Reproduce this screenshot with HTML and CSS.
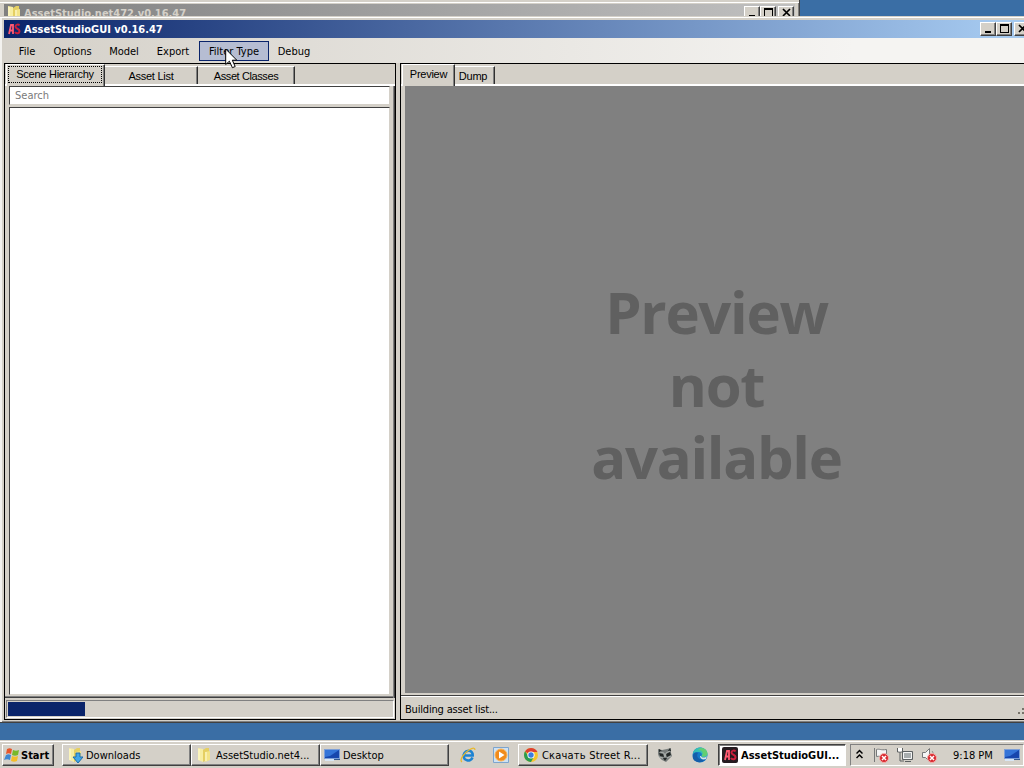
FILE: index.html
```html
<!doctype html>
<html>
<head>
<meta charset="utf-8">
<title>AssetStudioGUI v0.16.47</title>
<link rel="stylesheet" href="styles.css">
</head>
<body>
<svg class="defs" width="0" height="0">
  <defs>
    <symbol id="folder" viewBox="0 0 16 16">
      <path d="M2 1l5 1v13l-5-2z" fill="#f7eda2"/>
      <path d="M7 3l3-2h3v11l-6 3z" fill="#e5cf62"/>
      <path d="M9 5l5-1v9l-5 2z" fill="#f3e387"/>
      <path d="M3 2v11M10 5v9" stroke="#fffbd4"/>
    </symbol>
    <symbol id="as" viewBox="0 0 16 16">
      <path d="M3 13L5 4h2v9M4 9.500h3" fill="none" stroke="#ff5a72" stroke-width="1.800"/>
      <path d="M13.500 4.500c-1-1.500-4-1.200-4 1 0 2.500 4 2 4 4.500 0 2.800-3.500 2.800-4.500 1" fill="none" stroke="#c81f3c" stroke-width="2"/>
    </symbol>
    <symbol id="screen" viewBox="0 0 16 16">
      <path d="M0 2h16v10H0z" fill="#7d9fd8"/>
      <path d="M1 3h14v8H1z" fill="#1746ad"/>
      <path d="M1 3h14l-9 6-5 1z" fill="#3474d8"/>
      <path d="M1 12h9v2H1z" fill="#d8e6f5"/>
      <path d="M10 12h6v1h-6z" fill="#35598f"/>
    </symbol>
    <symbol id="no" viewBox="0 0 10 10">
      <circle cx="5" cy="5" r="4.500" fill="#d9282f" stroke="#f3b0ac"/>
      <path d="M3 3l4 4M7 3l-4 4" stroke="#fff" stroke-width="1.500"/>
    </symbol>
    <symbol id="min" viewBox="0 0 10 9"><path d="M1 7h6v2H1z"/></symbol>
    <symbol id="max" viewBox="0 0 10 9"><path d="M0 0h9v9H0zM1 2v6h7V2z" fill-rule="evenodd"/></symbol>
    <symbol id="close" viewBox="0 0 10 9"><path d="M1 1l7 7M8 1l-7 7" stroke="#000" stroke-width="1.700"/></symbol>
  </defs>
</svg>

<div class="desktop">
  <div class="window back">
    <div class="titlebar inactive">
      <svg class="icon"><use href="#folder"/></svg>
      <span class="caption">AssetStudio.net472.v0.16.47</span>
      <div class="controls">
        <span class="btn"><svg><use href="#min"/></svg></span>
        <span class="btn"><svg><use href="#max"/></svg></span>
        <span class="btn close"><svg><use href="#close"/></svg></span>
      </div>
    </div>
  </div>

  <div class="window main">
    <div class="titlebar">
      <svg class="icon"><use href="#as"/></svg>
      <span class="caption">AssetStudioGUI v0.16.47</span>
      <div class="controls">
        <span class="btn"><svg><use href="#min"/></svg></span>
        <span class="btn"><svg><use href="#max"/></svg></span>
        <span class="btn close"><svg><use href="#close"/></svg></span>
      </div>
    </div>
    <div class="menu">
      <span class="item file">File</span>
      <span class="item options">Options</span>
      <span class="item model">Model</span>
      <span class="item export">Export</span>
      <span class="item filter hot">Filter Type</span>
      <span class="item debug">Debug</span>
    </div>
    <div class="split">
      <div class="panel left">
        <div class="tabs">
          <span class="tab scene active"><span class="focus">Scene Hierarchy</span></span>
          <span class="tab list">Asset List</span>
          <span class="tab classes">Asset Classes</span>
        </div>
        <div class="page">
          <div class="search">Search</div>
          <div class="tree"></div>
        </div>
        <div class="progress"><div class="bar" style="width:77px"></div></div>
      </div>
      <div class="panel right">
        <div class="tabs">
          <span class="tab preview active">Preview</span>
          <span class="tab dump">Dump</span>
        </div>
        <div class="canvas">
          <p>Preview</p>
          <p>not</p>
          <p>available</p>
        </div>
        <div class="status">
          <span>Building asset list...</span>
          <svg class="grip" width="6" height="10"><path d="M4 1h2v2H4zM4 5h2v2H4zM0 5h2v2H0z" fill="#77736a"/></svg>
        </div>
      </div>
    </div>
  </div>

  <div class="taskbar">
    <div class="task start">
      <svg class="icon" viewBox="0 0 16 16">
        <path d="M3 2c2-1 3-1 5 0L7 7C5 6 4 6 2 7z" fill="#e8562a"/>
        <path d="M9 3c2 1 4 1 6 0l-1 5c-2 1-4 1-6 0z" fill="#79b829"/>
        <path d="M2 8c2-1 3-1 5 0l-1 5c-2-1-4-1-6 0z" fill="#3f87d1"/>
        <path d="M8 9c2 1 4 1 6 0l-1 5c-2 1-4 1-6 0z" fill="#f5bd28"/>
      </svg>
      <span>Start</span>
    </div>
    <div class="task downloads">
      <svg class="icon" viewBox="0 0 16 16">
        <use href="#folder"/>
        <path d="M9 6h4v4h3l-5 6-5-6h3z" fill="#41a6e8" stroke="#1c6cab"/>
      </svg>
      <span>Downloads</span>
    </div>
    <div class="task assets">
      <svg class="icon"><use href="#folder"/></svg>
      <span>AssetStudio.net4...</span>
    </div>
    <div class="task desk">
      <svg class="icon"><use href="#screen"/></svg>
      <span>Desktop</span>
    </div>
    <svg class="icon ie" viewBox="0 0 16 16">
      <path d="M12.500 10.500C11.500 13 9 14 7 13.300 3.500 12.500 2.800 8.500 4.500 6c2-3 6-3 7.500-.5.7 1 .8 2 .7 3H5" fill="none" stroke="#1c83d3" stroke-width="2.600"/>
      <path d="M2 15C-1 13 4 6 9 3c4-2.500 6-2.500 6 0" fill="none" stroke="#e8b92c" stroke-width="1.300"/>
    </svg>
    <svg class="icon wmp" viewBox="0 0 16 16">
      <path d="M.5.5h15v15H.5z" fill="#cfe2f3" stroke="#7da5ce"/>
      <circle cx="8" cy="8" r="6" fill="#f08b1d"/>
      <circle cx="8" cy="8" r="6" fill="none" stroke="#fbb254"/>
      <path d="M6 4.500L11.500 8 6 11.500z" fill="#fff"/>
    </svg>
    <div class="task chrome">
      <svg class="icon" viewBox="0 0 16 16">
        <circle cx="8" cy="8" r="7" fill="#f6c52e"/>
        <path d="M8 8L2 4.500C5-.5 12 0 14.500 5H8z" fill="#df4031"/>
        <path d="M2 4.300C-.5 9 2 14.500 8 15l3-5.500-5 .5z" fill="#2b9c51"/>
        <circle cx="8" cy="8" r="3.600" fill="#fff"/>
        <circle cx="8" cy="8" r="2.700" fill="#3b7de0"/>
      </svg>
      <span>Скачать Street R...</span>
    </div>
    <svg class="icon raccoon" viewBox="0 0 16 16">
      <path d="M1 2l4 1 5-1 4-1v5l1 3-3 3-3 3-4-2-3-3-1-3z" fill="#777c7b"/>
      <path d="M2 6l4 1 1 3-4-1zM9 7l4-2 1 3-4 2zM6 11h4l-2 3zM2 2l3 2-3 1zM13 1l-2 3h3z" fill="#222726"/>
      <path d="M3 5l4 1 1 4 1-4 4-2M2 10l4 1M10 11l4-2" fill="none" stroke="#b9beba" stroke-width=".8"/>
    </svg>
    <svg class="icon edge" viewBox="0 0 16 16">
      <circle cx="8" cy="8" r="7.500" fill="#1679c8"/>
      <path d="M1 7C2-2 15-1 15.500 7c0 4-5 4-6 2 1-2 0-4-3-4-2 0-4 0-5.500 2z" fill="#36bfb4"/>
      <path d="M9 1c6 0 8 6 5 8-2 1-4 1-4.500 0C12 7 11 3 6 3z" fill="#62cf72"/>
      <path d="M6 6c-3 5 3 8 7.500 6C9 18-1 15 1 8c1-3 4-3 5-2z" fill="#155eaa"/>
      <path d="M9 9c1 2 4 2 6 0l-1 3c-3 1-6 0-6-3z" fill="#d9e5e5"/>
    </svg>
    <div class="task current">
      <svg class="icon" viewBox="0 0 16 16"><rect width="16" height="16" rx="2" fill="#241b20"/><use href="#as"/></svg>
      <span>AssetStudioGUI...</span>
    </div>
    <div class="tray">
      <svg class="chevrons" viewBox="0 0 7 10"><path d="M.5 4.500l3-3 3 3M.5 9l3-3 3 3" fill="none" stroke="#000" stroke-width="1.500"/></svg>
      <svg class="icon flag" viewBox="0 0 16 16">
        <path d="M1.500 1v14M3.500 2.500c3-1 4 1 10 0v7c-5 1-7-1-10 0z" fill="#f4f4f4" stroke="#77797a"/>
        <use href="#no" x="6" y="6" width="10" height="10"/>
      </svg>
      <svg class="icon net" viewBox="0 0 16 16">
        <path d="M5.500 4.500h10v8h-10z" fill="#a8adae" stroke="#5c6061"/>
        <path d="M6.500 5.500h8v6h-8z" fill="none" stroke="#f6f6f6"/>
        <path d="M8 14.500h6M.5 1v4h5V1M3 5v9h4" fill="none" stroke="#5c6061"/>
        <path d="M1.500 1v3h3V1" fill="#fff" stroke="#fff"/>
      </svg>
      <svg class="icon vol" viewBox="0 0 16 16">
        <path d="M1.500 5.500h3l4-4v13l-4-4h-3z" fill="#f5f5f5" stroke="#77797a"/>
        <path d="M11 4c1 1 1 2 1 3" fill="none" stroke="#888"/>
        <use href="#no" x="6" y="6" width="10" height="10"/>
      </svg>
      <span class="clock">9:18 PM</span>
      <svg class="icon show"><use href="#screen"/></svg>
    </div>
  </div>

  <svg class="cursor" viewBox="0 0 13 21"><path d="M.7 1v15.500l3.700-3.300 3 6.500 2.800-1.200-2.900-6.300h4.500z" fill="#fff" stroke="#000"/></svg>
</div>
</body>
</html>
```
FILE: styles.css
```css
* { box-sizing: border-box; }
body {
  margin: 0;
  overflow: hidden;
  font-family: "DejaVu Sans Condensed", "DejaVu Sans", sans-serif;
  font-stretch: condensed;
  font-size: 11px;
  color: #000;
}
p { margin: 0; }
svg { display: block; flex: none; }
span { white-space: nowrap; }
.defs { position: absolute; }
.desktop {
  position: relative;
  width: 1024px;
  height: 768px;
  overflow: hidden;
  background: #3a6ea5;
}
.icon { width: 16px; height: 16px; }

/* windows */
.window {
  position: absolute;
  background: #d4d0c8;
}
.back {
  left: 0;
  top: 0;
  width: 800px;
  height: 30px;
  padding: 4px 4px 0;
  border-right: 1px solid #404040;
  box-shadow: inset 0 2px #d4d0c8, inset 0 3px #fff, inset -1px 0 #808080;
}
.main {
  left: 0;
  top: 16px;
  width: 1040px;
  height: 707px;
  padding: 4px 0 0 4px;
  border-bottom: 1px solid #404040;
  box-shadow: inset 0 1px #d4d0c8, inset 0 2px #fff, inset 2px 0 #f3f2ef, inset 0 -1px #808080;
}
.titlebar {
  display: flex;
  align-items: center;
  height: 18px;
  padding-left: 2px;
  color: #fff;
  font-weight: bold;
  background: linear-gradient(90deg, #0a246a, #a6caf0 1000px);
}
.inactive {
  color: #d4d0c8;
  background: linear-gradient(90deg, #808080, #c0c0c0);
}
.caption { margin-left: 2px; }
.controls {
  display: flex;
  margin-left: auto;
  margin-right: 10px;
}
.inactive .controls { margin-right: 1px; }
.btn {
  width: 16px;
  height: 14px;
  padding: 1px 0 0 3px;
  background: #d4d0c8;
  border: 1px solid;
  border-color: #fff #404040 #404040 #fff;
  box-shadow: inset -1px -1px #808080;
}
.btn svg { width: 10px; height: 9px; }
.btn.close { margin-left: 2px; }

.menu {
  display: flex;
  height: 25px;
  padding: 3px 0 2px 6px;
  background: linear-gradient(90deg, #d4d0c8, #f5f4f2 850px);
}
.item {
  height: 20px;
  border: 1px solid transparent;
  line-height: 20px;
  text-align: center;
}
.file { width: 34px; }
.options { width: 57px; }
.model { width: 46px; }
.export { width: 52px; }
.filter { width: 70px; }
.debug { width: 50px; }
.hot {
  background: #b6bdd2;
  border-color: #0a246a;
}

/* panels */
.split {
  display: flex;
  gap: 4px;
  height: 657px;
}
.panel {
  display: flex;
  flex-direction: column;
  border: 1px solid #000;
}
.left { width: 392px; flex: none; }
.right { flex: 1; }
.tabs {
  display: flex;
  align-items: flex-end;
  height: 22px;
  padding-left: 1px;
  border-bottom: 2px solid #fff;
  font-family: "Liberation Sans", sans-serif;
  font-size: 11px;
  letter-spacing: -.25px;
}
.tab {
  height: 18px;
  line-height: 18px;
  text-align: center;
  border-top: 1px solid #fff;
  border-right: 1px solid #303030;
  box-shadow: inset -1px 0 #808080;
}
.tab.active {
  height: 22px;
  margin-bottom: -2px;
  line-height: 19px;
  background: #d4d0c8;
  border-left: 1px solid #fff;
}
.scene { width: 99px; padding: 1px 2px 2px 1px; }
.focus {
  display: block;
  height: 17px;
  border: 1px dotted #000;
  line-height: 15px;
}
.list { width: 93px; }
.classes { width: 97px; letter-spacing: -.4px; }
.preview { width: 53px; }
.dump { width: 40px; padding-right: 3px; }
.page {
  display: flex;
  flex-direction: column;
  flex: 1;
  padding: 0 5px 3px 4px;
  box-shadow: inset -1px 0 #404040, inset -2px 0 #808080, inset 0 -1px #404040, inset 0 -2px #808080;
}
.search, .tree {
  background: #fff;
  border: 1px solid #808080;
  border-top-color: #404040;
  border-left-color: #404040;
  border-right-color: #d4d0c8;
  border-bottom-color: #d4d0c8;
}
.search {
  height: 19px;
  padding-left: 5px;
  line-height: 18px;
  color: #7a7a7a;
}
.tree { flex: 1; margin-top: 2px; }
.progress {
  height: 18px;
  margin: 2px 1px 1px;
  padding: 1px;
  border: 1px solid;
  border-color: #808080 #fff #fff #808080;
}
.bar { height: 14px; background: #0a246a; }
.canvas {
  flex: 1;
  margin-left: 4px;
  padding-top: 190px;
  padding-right: 11px;
  background: #808080;
  color: #606060;
  font: bold 58px/72.500px "Open Sans", sans-serif;
  letter-spacing: -1.300px;
  text-align: center;
}
.status {
  display: flex;
  align-items: center;
  height: 26px;
  padding: 4px 15px 0 4px;
  border-top: 2px solid #d4d0c8;
  box-shadow: inset 0 1px #404040, inset 0 2px #fff;
  letter-spacing: -.18px;
}
.grip { margin: 6px 0 0 auto; }

/* taskbar */
.taskbar {
  position: absolute;
  left: 0;
  top: 740px;
  width: 1024px;
  height: 28px;
  display: flex;
  align-items: center;
  padding: 2px 0 0 2px;
  background: #d4d0c8;
  box-shadow: inset 0 1px #d4d0c8, inset 0 2px #fff;
}
.task {
  display: flex;
  align-items: center;
  flex: none;
  width: 129px;
  height: 22px;
  padding-left: 4px;
  border: 1px solid;
  border-color: #fff #404040 #404040 #fff;
  box-shadow: inset -1px -1px #808080;
}
.task span { margin-left: 3px; }
.start { width: 52px; padding-left: 1px; font-weight: bold; }
.start span { margin-left: 1px; }
.downloads { margin-left: 8px; }
.assets span { margin-left: 4px; }
.desk { width: 129px; padding-left: 3px; }
.ie { margin-left: 11px; }
.wmp { margin-left: 17px; }
.chrome { margin-left: 9px; width: 130px; letter-spacing: .2px; }
.raccoon { margin-left: 9px; }
.edge { margin-left: 19px; }
.current {
  margin-left: 10px;
  width: 128px;
  padding-left: 3px;
  font-weight: bold;
  background: #fff;
  border-color: #404040 #fff #fff #404040;
  box-shadow: inset 1px 1px #808080;
}
.tray {
  display: flex;
  align-items: center;
  width: 174px;
  height: 22px;
  margin-left: 4px;
  padding-left: 5px;
  border: 1px solid;
  border-color: #808080 #fff #fff #808080;
}
.chevrons { width: 7px; height: 10px; margin-bottom: 3px; }
.flag { margin-left: 10px; }
.net, .vol { margin-left: 8px; }
.clock { width: 40px; margin-left: 16px; }
.show { margin-left: 11px; }

.cursor {
  position: absolute;
  left: 225px;
  top: 48px;
  width: 13px;
  height: 21px;
}
```
